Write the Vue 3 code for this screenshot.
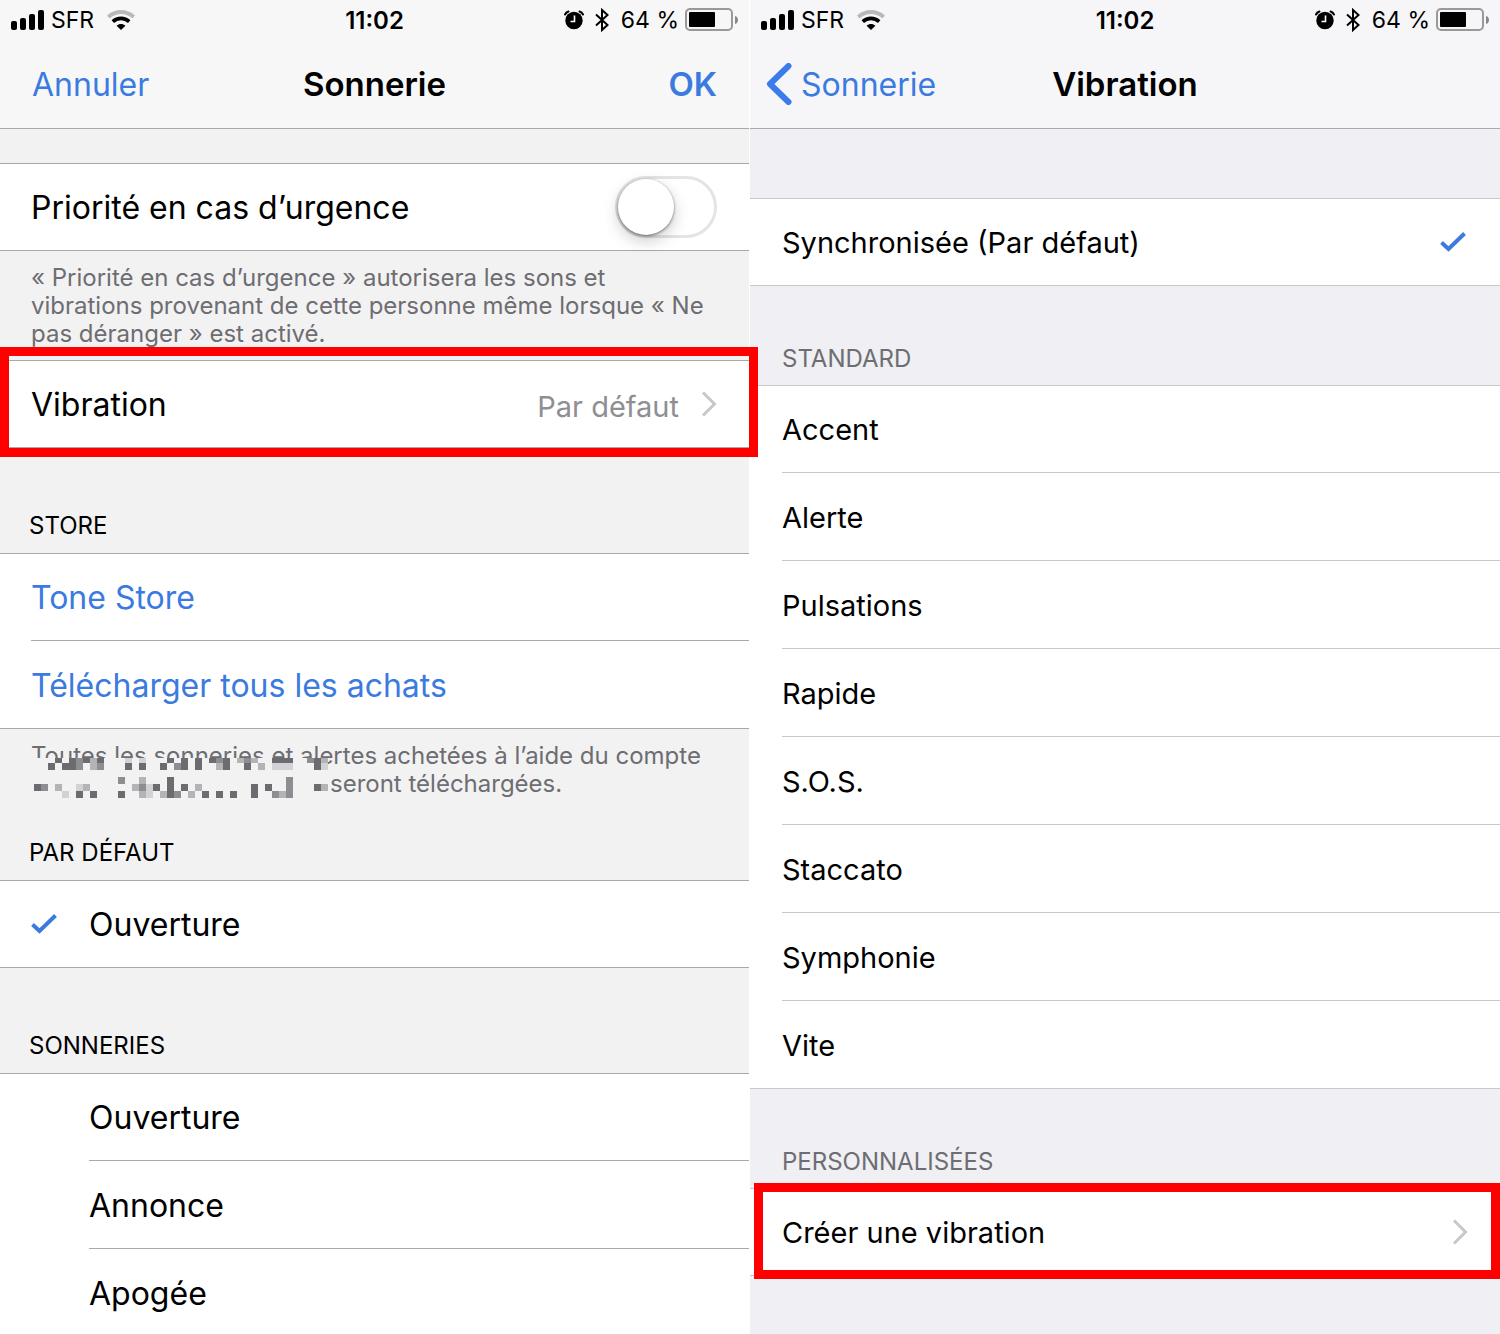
<template>
  <main class="screens">
    <section v-for="screen in screens" :key="screen" class="phone" :class="'phone--' + screen">
      <header class="top">
        <div class="status">
          <div class="status-side">
            <svg class="ic-signal" viewBox="0 0 33 20" aria-hidden="true">
              <rect x="0" y="11" width="6" height="9" rx="2" />
              <rect x="9" y="8" width="6" height="12" rx="2" />
              <rect x="18" y="4" width="6" height="16" rx="2" />
              <rect x="27" y="0" width="6" height="20" rx="2" />
            </svg>
            <span class="carrier">SFR</span>
            <svg class="ic-wifi" viewBox="0 0 28 20" aria-hidden="true">
              <path d="M1.3 7C8.500 0.300 19.500 0.300 26.700 7" fill="none" stroke="#b9b9b9" stroke-width="3.800" />
              <path d="M5.800 11.600C10.500 7.300 17.500 7.300 22.200 11.600" fill="none" stroke="#000" stroke-width="3.600" />
              <path d="M9.600 15.800C12.200 13.300 15.800 13.300 18.400 15.800L14 20Z" />
            </svg>
          </div>
          <span class="clock">11:02</span>
          <div class="status-side status-side--end">
            <svg class="ic-alarm" viewBox="0 0 20 20" aria-hidden="true">
              <circle cx="10" cy="10.500" r="8.700" />
              <path d="M1 4.500Q2 2.300 4.500 1.500M19 4.500Q18 2.300 15.500 1.500" fill="none" stroke="#000" stroke-width="2" stroke-linecap="round" />
              <path d="M10.500 5.500V11.500H6.500" fill="none" stroke="#fff" stroke-width="1.600" />
            </svg>
            <svg class="ic-bt" viewBox="0 0 14 24" aria-hidden="true">
              <path d="M1 6.500L12.500 17L7 22V2L12.500 7L1 17.500" />
            </svg>
            <span class="percent">64 %</span>
            <svg class="ic-battery" viewBox="0 0 53 24" aria-hidden="true">
              <rect x="1" y="1" width="46" height="21" rx="4" fill="none" stroke="#999" stroke-width="2" />
              <rect x="4" y="4" width="26" height="15" rx="1" />
              <path d="M50 8C54 9 54 15 50 16Z" fill="#888" />
            </svg>
          </div>
        </div>
        <nav v-if="screen === 'sonnerie'" class="nav">
          <button class="nav-btn" type="button">Annuler</button>
          <h1 class="nav-title">Sonnerie</h1>
          <button class="nav-btn nav-btn--strong" type="button">OK</button>
        </nav>
        <nav v-else class="nav nav--back">
          <button class="nav-btn" type="button">
            <svg class="ic-back" viewBox="0 0 26 42" aria-hidden="true"><path d="M22.500 3L4 21L22.500 39" /></svg>
            Sonnerie
          </button>
          <h1 class="nav-title">Vibration</h1>
        </nav>
      </header>

      <template v-if="screen === 'sonnerie'">
        <div class="group group--first">
          <label class="row" for="urgence">
            <span class="row-body">
              Priorité en cas d’urgence
              <input id="urgence" v-model="priority" class="switch" type="checkbox" />
            </span>
          </label>
        </div>
        <p class="note note--priority">
          « Priorité en cas d’urgence » autorisera les sons et<br />
          vibrations provenant de cette personne même lorsque « Ne<br />
          pas déranger » est activé.
        </p>

        <div class="group group--marked">
          <button class="row" type="button">
            <span class="row-body">
              Vibration
              <span class="row-value">
                <span class="row-value-text">Par défaut</span>
                <svg class="ic-chevron" viewBox="0 0 16 26" aria-hidden="true"><path d="M2 1.500L13.500 13L2 24.500" /></svg>
              </span>
            </span>
          </button>
        </div>

        <h2 class="caption">STORE</h2>
        <div class="group">
          <a v-for="link in storeLinks" :key="link" class="row row--link" href="#">
            <span class="row-body">{{ link }}</span>
          </a>
        </div>
        <p class="note note--store">
          Toutes les sonneries et alertes achetées à l’aide du compte<br />
          <span class="account"></span>seront téléchargées.
          <svg class="mosaic" viewBox="0 0 297 40" shape-rendering="crispEdges" aria-hidden="true">
            <rect width="296" height="40" fill="#f2f2f2" />
            <rect v-for="(c, i) in mosaic" :key="i" :x="c.x" :y="c.y" width="7" :height="c.h" :fill="c.fill" />
          </svg>
        </p>

        <h2 class="caption caption--tight">PAR DÉFAUT</h2>
        <div class="group">
          <label class="row">
            <input v-model="tone" class="pick" type="radio" name="tone" value="default" />
            <span class="check-slot">
              <svg v-if="tone === 'default'" class="ic-check" viewBox="0 0 28 20" aria-hidden="true"><path d="M1.500 10.500L8.500 17L24.500 1.500" /></svg>
            </span>
            <span class="row-body">Ouverture</span>
          </label>
        </div>

        <h2 class="caption">SONNERIES</h2>
        <div class="group">
          <label v-for="name in tones" :key="name" class="row">
            <input v-model="tone" class="pick" type="radio" name="tone" :value="name" />
            <span class="check-slot">
              <svg v-if="tone === name" class="ic-check" viewBox="0 0 28 20" aria-hidden="true"><path d="M1.500 10.500L8.500 17L24.500 1.500" /></svg>
            </span>
            <span class="row-body">{{ name }}</span>
          </label>
        </div>
      </template>

      <template v-else>
        <div class="group group--first">
          <label class="row">
            <input v-model="vibration" class="pick" type="radio" name="vibration" value="sync" />
            <span class="row-body">
              Synchronisée (Par défaut)
              <svg v-if="vibration === 'sync'" class="ic-check" viewBox="0 0 28 20" aria-hidden="true"><path d="M1.500 10.500L8.500 17L24.500 1.500" /></svg>
            </span>
          </label>
        </div>

        <h2 class="caption">STANDARD</h2>
        <div class="group">
          <label v-for="name in vibrations" :key="name" class="row">
            <input v-model="vibration" class="pick" type="radio" name="vibration" :value="name" />
            <span class="row-body">
              {{ name }}
              <svg v-if="vibration === name" class="ic-check" viewBox="0 0 28 20" aria-hidden="true"><path d="M1.500 10.500L8.500 17L24.500 1.500" /></svg>
            </span>
          </label>
        </div>

        <h2 class="caption">PERSONNALISÉES</h2>
        <div class="group group--marked">
          <button class="row" type="button">
            <span class="row-body">
              Créer une vibration
              <svg class="ic-chevron" viewBox="0 0 16 26" aria-hidden="true"><path d="M2 1.500L13.500 13L2 24.500" /></svg>
            </span>
          </button>
        </div>
      </template>
    </section>
  </main>
</template>

<script setup>
import { ref } from 'vue';

const screens = ['sonnerie', 'vibration'];

const priority = ref(false);
const tone = ref('default');
const vibration = ref('sync');

const storeLinks = ['Tone Store', 'Télécharger tous les achats'];
const tones = ['Ouverture', 'Annonce', 'Apogée'];
const vibrations = ['Accent', 'Alerte', 'Pulsations', 'Rapide', 'S.O.S.', 'Staccato', 'Symphonie', 'Vite'];

// Adresse du compte pixelisée : colonnes de 7px, par teinte
const D = '#6c6c70';
const M = '#8e8e92';
const L = '#b4b4b6';
const P = '#d2d2d4';
const mosaicRows = [
  { y: 0, h: 5, cells: { [D]: [3, 5, 7, 9, 19, 21, 23, 25, 27, 34, 35, 36, 40], [M]: [6, 26, 30, 39], [L]: [8, 29, 31, 41], [P]: [13, 15] } },
  { y: 5, h: 7, cells: { [D]: [2, 4, 5, 13, 15, 18, 21, 23, 27, 30, 40], [M]: [6, 9, 20], [L]: [8, 26, 32], [P]: [34, 35, 36, 41] } },
  { y: 19, h: 7, cells: { [D]: [19], [M]: [12, 36], [L]: [15] } },
  { y: 26, h: 7, cells: { [D]: [0, 17, 19, 21, 31, 33, 40], [M]: [1, 15, 36], [L]: [3, 7, 14, 23, 41], [P]: [6, 16] } },
  { y: 33, h: 7, cells: { [D]: [6, 8, 12, 19, 24, 26, 28, 31], [M]: [20, 34, 36], [L]: [15, 18, 22, 35], [P]: [4, 16] } }
];
const mosaic = mosaicRows.flatMap(({ y, h, cells }) =>
  Object.entries(cells).flatMap(([fill, cols]) => cols.map((c) => ({ x: 3 + c * 7, y, h, fill })))
);
</script>

<style>
body {
  background: #fff;
}
</style>

<style scoped>
.screens {
  display: grid;
  grid-template-columns: 1fr 1fr;
  height: 100vh;
  overflow: hidden;
  font-family: Inter, "Liberation Sans", sans-serif;
  color: #000;
}
.phone {
  min-width: 0;
}
.phone--sonnerie {
  --line: #a9a9ab;
  --bar: #f7f7f7;
  position: relative;
  z-index: 1;
  border-right: 1px solid #fff;
  background: #f2f2f2;
  font-size: 32px;
}
.phone--vibration {
  --line: #c8c7cc;
  --bar: #f6f6f8;
  background: #efeff4;
  font-size: 29px;
}

/* barre d'état + navigation */
.top {
  box-sizing: border-box;
  height: 129px;
  border-bottom: 1px solid #a9a9ad;
  background: var(--bar);
}
.status {
  display: grid;
  grid-template-columns: 1fr auto 1fr;
  align-items: center;
  height: 40px;
  padding: 0 11px;
  font-size: 23px;
}
.status-side {
  display: flex;
  align-items: center;
}
.status-side--end {
  justify-content: flex-end;
}
.clock {
  font-size: 24px;
  font-weight: 600;
}
.ic-signal {
  width: 33px;
  height: 20px;
}
.carrier {
  margin: 0 13px 0 7px;
}
.ic-wifi {
  width: 28px;
  height: 20px;
}
.ic-alarm {
  width: 20px;
  height: 20px;
}
.ic-bt {
  width: 14px;
  height: 24px;
  margin: 0 12px 0 11px;
  fill: none;
  stroke: #000;
  stroke-width: 2;
}
.ic-battery {
  width: 53px;
  height: 24px;
  margin-left: 6px;
}
.nav {
  display: grid;
  grid-template-columns: 1fr auto 1fr;
  align-items: center;
  height: 88px;
  padding: 0 32px;
  font-size: 32px;
}
.nav--back {
  padding: 0 16px;
}
.nav-btn {
  display: flex;
  align-items: center;
  gap: 9px;
  justify-self: start;
  padding: 0;
  border: 0;
  background: none;
  color: #3b7be0;
  font: inherit;
  cursor: pointer;
}
.nav-btn--strong {
  justify-self: end;
  font-size: 33px;
  font-weight: 600;
}
.nav-title {
  margin: 0;
  font-size: 33px;
  font-weight: 600;
}
.ic-back {
  width: 26px;
  height: 42px;
  fill: none;
  stroke: #3b7bea;
  stroke-width: 6;
  stroke-linecap: round;
  stroke-linejoin: round;
}

/* listes */
.group {
  position: relative;
  border-top: 1px solid var(--line);
  background: #fff;
}
.phone--sonnerie .group--first {
  margin-top: 34px;
}
.phone--vibration .group--first {
  margin-top: 69px;
}
.row {
  position: relative;
  display: flex;
  align-items: stretch;
  box-sizing: border-box;
  width: 100%;
  height: 88px;
  padding: 1px 0 0 32px;
  border: 0;
  background: none;
  color: inherit;
  font: inherit;
  text-align: left;
  text-decoration: none;
  cursor: pointer;
}
.phone--sonnerie .row {
  padding-left: 31px;
}
.row:first-child {
  height: 87px;
  padding-top: 0;
}
.row:last-child {
  border-bottom: 1px solid var(--line);
}
.row-body {
  display: flex;
  flex: 1;
  align-items: center;
  justify-content: space-between;
  padding-right: 32px;
  border-bottom: 1px solid var(--line);
}
.row:last-child .row-body {
  border-bottom: 0;
}
.row--link {
  color: #3b7be0;
}
.row-value {
  display: flex;
  align-items: center;
  gap: 22px;
  color: #8e8e93;
  font-size: 29px;
}
.row-value-text {
  padding-top: 4px;
}
.check-slot {
  display: flex;
  align-items: center;
  width: 58px;
}
.pick {
  position: absolute;
  margin: 0;
  opacity: 0;
}
.ic-check {
  width: 28px;
  height: 20px;
  fill: none;
  stroke: #3b7be0;
  stroke-width: 4;
}
.ic-chevron {
  width: 16px;
  height: 26px;
  fill: none;
  stroke: #c7c7cc;
  stroke-width: 3;
}
.switch {
  appearance: none;
  box-sizing: border-box;
  width: 102px;
  height: 62px;
  margin: 0;
  border: 3px solid #e4e4e4;
  border-radius: 31px;
  background: #fff;
  cursor: pointer;
}
.switch::before {
  content: "";
  display: block;
  width: 56px;
  height: 56px;
  border-radius: 50%;
  background: #fff;
  box-shadow: 0 6px 16px rgba(0, 0, 0, 0.2), 0 1px 3px rgba(0, 0, 0, 0.5);
}
.switch:checked {
  border-color: #4cd964;
  background: #4cd964;
}
.switch:checked::before {
  margin-left: 40px;
}

.caption {
  margin: 0;
  padding: 64px 29px 13px;
  font-size: 24px;
  font-weight: 400;
  line-height: 28px;
}
.phone--vibration .caption {
  padding: 59px 32px 12px;
  color: #6d6d72;
}
.caption--tight {
  padding-top: 0;
}
.note {
  position: relative;
  margin: 0;
  padding: 13px 0 12px 31px;
  color: #6d6d72;
  font-size: 24px;
  line-height: 28px;
  white-space: nowrap;
}
.note--store {
  padding-bottom: 41px;
}
.account {
  display: inline-block;
  width: 299px;
}
.mosaic {
  position: absolute;
  top: 29px;
  left: 31px;
  width: 297px;
  height: 40px;
}

/* cadres rouges, débordent de la ligne encadrée */
.group--marked::after {
  content: "";
  position: absolute;
  border: 9px solid #fe0000;
  pointer-events: none;
}
.phone--sonnerie .group--marked::after {
  inset: -14px -9px -9px 0;
}
.phone--vibration .group--marked::after {
  inset: -6px 0 -3px 4px;
}
</style>
